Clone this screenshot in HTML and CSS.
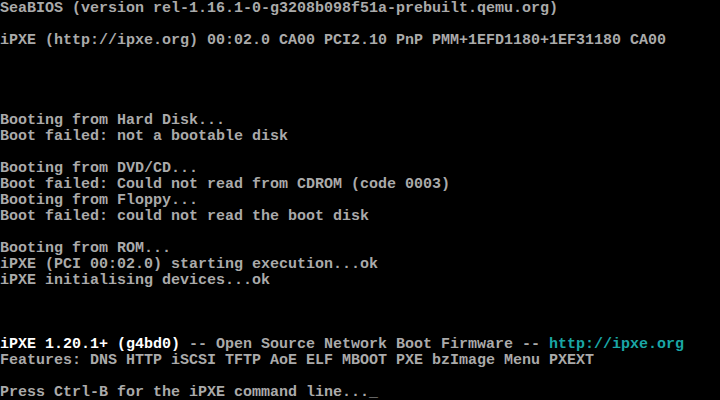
FILE: index.html
```html
<!DOCTYPE html>
<html>
<head>
<meta charset="utf-8">
<link rel="stylesheet" href="styles.css">
</head>
<body>
<pre class="screen">SeaBIOS (version rel-1.16.1-0-g3208b098f51a-prebuilt.qemu.org)

iPXE (http://ipxe.org) 00:02.0 CA00 PCI2.10 PnP PMM+1EFD1180+1EF31180 CA00




Booting from Hard Disk...
Boot failed: not a bootable disk

Booting from DVD/CD...
Boot failed: Could not read from CDROM (code 0003)
Booting from Floppy...
Boot failed: could not read the boot disk

Booting from ROM...
iPXE (PCI 00:02.0) starting execution...ok
iPXE initialising devices...ok



<span class="bright">iPXE 1.20.1+ (g4bd0)</span> -- Open Source Network Boot Firmware -- <span class="cyan">http://ipxe.org</span>
Features: DNS HTTP iSCSI TFTP AoE ELF MBOOT PXE bzImage Menu PXEXT

Press Ctrl-B for the iPXE command line..._</pre>
</body>
</html>
```
FILE: styles.css
```css
html, body {
  margin: 0;
  padding: 0;
  background: #000;
  width: 720px;
  height: 400px;
  overflow: hidden;
}
.screen {
  margin: 0;
  padding: 1px 0 0 0;
  font-family: "Liberation Mono", "DejaVu Sans Mono", monospace;
  font-weight: bold;
  font-size: 15px;
  line-height: 16px;
  color: #aaaaaa;
  white-space: pre;
}
.bright {
  color: #ffffff;
}
.cyan {
  color: #1aa6a6;
}
```
